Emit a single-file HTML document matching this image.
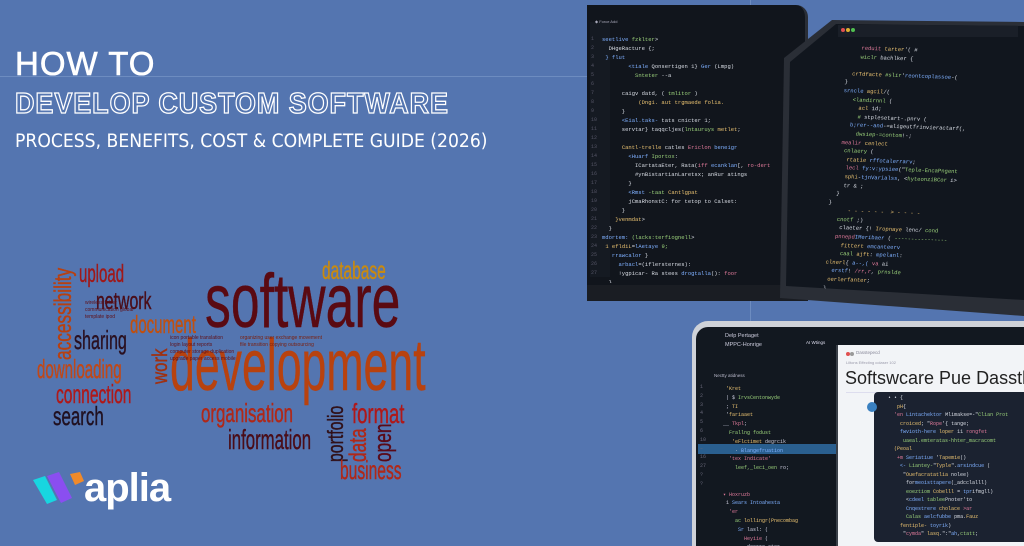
<!DOCTYPE html>
<html><head><meta charset="utf-8"><style>
*{margin:0;padding:0;box-sizing:border-box}
body{width:1024px;height:546px;overflow:hidden;background:#5475b0;font-family:"Liberation Sans",sans-serif;position:relative}
.a{position:absolute;white-space:nowrap}
.clip{position:absolute;overflow:hidden}
.w{position:absolute;white-space:nowrap;font-family:"Liberation Sans",sans-serif;line-height:1;transform-origin:0 0;-webkit-text-stroke:0.4px currentColor}
.code{position:absolute;font-family:"Liberation Mono",monospace;font-size:5.5px;line-height:9px;color:#d8dce4;white-space:pre}
.code b{font-weight:normal;color:#7fb0ff}.code i{font-style:normal;color:#e8c070}.code u{text-decoration:none;color:#9ad07a}.code s{text-decoration:none;color:#e07a9a}
.ln{position:absolute;font-family:"Liberation Mono",monospace;font-size:5px;line-height:9px;color:#556;white-space:pre}
</style></head><body>
<div class="a" style="left:0;top:76px;width:587px;height:1px;background:#6d8cc0"></div>
<div class="a" style="left:750px;top:0;width:1px;height:330px;background:#6d8cc0"></div>

<div class="a" style="left:15px;top:45px;font-size:33px;color:#fff;letter-spacing:1px;-webkit-text-stroke:0.6px #fff">HOW TO</div>
<div class="a" style="left:15px;top:88px;font-size:29px;font-weight:bold;color:transparent;-webkit-text-stroke:1.3px #fff;letter-spacing:1px;transform:scaleX(0.93);transform-origin:0 0">DEVELOP CUSTOM SOFTWARE</div>
<div class="a" style="left:15px;top:131px;font-size:18.5px;color:#fff;font-family:'DejaVu Sans',sans-serif;transform:scaleX(0.93);transform-origin:0 0">PROCESS, BENEFITS, COST &amp; COMPLETE GUIDE (2026)</div>

<!-- word cloud -->
<div class="w" style="left:205px;top:264px;font-size:76px;color:#5a0a12;transform:scaleX(0.68)">software</div>
<div class="w" style="left:170px;top:330px;font-size:72px;color:#b8420f;transform:scaleX(0.62)">development</div>
<div class="w" style="left:322px;top:259px;font-size:25px;color:#c98a10;transform:scaleX(0.62)">database</div>
<div class="w" style="left:79px;top:262px;font-size:25px;color:#a01818;transform:scaleX(0.6)">upload</div>
<div class="w" style="left:52px;top:360px;font-size:24px;color:#b84010;transform:rotate(-90deg) scaleX(0.72)">accessibility</div>
<div class="w" style="left:96px;top:290px;font-size:24px;color:#4a0d18;transform:scaleX(0.66)">network</div>
<div class="w" style="left:130px;top:313px;font-size:25px;color:#c05010;transform:scaleX(0.6)">document</div>
<div class="w" style="left:74px;top:327px;font-size:26px;color:#2a1020;transform:scaleX(0.62)">sharing</div>
<div class="w" style="left:150px;top:384px;font-size:21px;color:#a03010;transform:rotate(-90deg) scaleX(0.8)">work</div>
<div class="w" style="left:37px;top:356px;font-size:26px;color:#c04818;transform:scaleX(0.58)">downloading</div>
<div class="w" style="left:56px;top:381px;font-size:26px;color:#b01818;transform:scaleX(0.6)">connection</div>
<div class="w" style="left:53px;top:403px;font-size:26px;color:#201020;transform:scaleX(0.65)">search</div>
<div class="w" style="left:201px;top:400px;font-size:26px;color:#b02818;transform:scaleX(0.65)">organisation</div>
<div class="w" style="left:228px;top:426px;font-size:28px;color:#4a0d18;transform:scaleX(0.6)">information</div>
<div class="w" style="left:325px;top:462px;font-size:22px;color:#301018;transform:rotate(-90deg) scaleX(0.72)">portfolio</div>
<div class="w" style="left:352px;top:400px;font-size:28px;color:#b01818;transform:scaleX(0.66)">format</div>
<div class="w" style="left:347px;top:462px;font-size:24px;color:#b02818;transform:rotate(-90deg) scaleX(0.72)">data</div>
<div class="w" style="left:372px;top:462px;font-size:24px;color:#5a0a18;transform:rotate(-90deg) scaleX(0.72)">open</div>
<div class="w" style="left:340px;top:457px;font-size:26px;color:#b02818;transform:scaleX(0.6)">business</div>
<div class="w" style="left:85px;top:300px;font-size:5px;color:#601018;line-height:7px;-webkit-text-stroke:0">wireless  folder<br>communication  global<br> template  ipod</div>
<div class="w" style="left:170px;top:335px;font-size:5px;color:#601018;line-height:7px;-webkit-text-stroke:0">icon  portable  translation<br>login  layout  reports<br>computer  storage  duplication<br>upgrade  paper  access  mobile</div>
<div class="w" style="left:240px;top:335px;font-size:5px;color:#7a2010;line-height:7px;-webkit-text-stroke:0">organizing  user  exchange  movement<br>file  transition  copying  outsourcing</div>

<!-- logo -->
<svg class="a" style="left:32px;top:470px" width="56" height="36" viewBox="0 0 56 36">
<path d="M1 10 L13 6 L25 30 L15 34 Z" fill="#18d6e0"/>
<path d="M15 6 L27 2 L40 28 L29 33 Z" fill="#8a4ef0"/>
<path d="M38 4 L48 2 L52 11 L43 15 Z" fill="#f08a2a"/>
</svg>
<div class="a" style="left:84px;top:466px;font-size:40px;font-weight:bold;color:#fff;letter-spacing:-1px">aplia</div>

<!-- laptop 1 -->
<div class="a" style="left:587px;top:5px;width:221px;height:296px;background:#11151c;border-radius:0 12px 0 0;border-right:3px solid #2a2e36"></div>
<div class="a" style="left:587px;top:285px;width:221px;height:16px;background:#1a1d23"></div>
<div class="a" style="left:590px;top:22px;width:20px;height:255px;background:#151a22"></div>
<div class="clip" style="left:587px;top:5px;width:218px;height:278px">
<div class="a" style="left:8px;top:14px;font-size:4px;color:#aab">◆ Force Add</div>
<div class="ln" style="left:4px;top:30px">1
2
3
4
5
6
7
8
9
10
11
12
13
14
15
16
17
18
19
20
21
22
23
24
25
26
27</div>
<div class="code" style="left:15px;top:30px"><b>seetlive</b> <u>fzklter</u>&gt;
  DHgeRacture {;
 <b>} flut</b>
        <b>&lt;tiale</b> Qonsertigen 1} <b>Ger</b> (Lmpg)
          <u>Snteter</u> --a

      caigv datd, ( <u>tmlitor</u> )
           <i>(Dngi. aut trgmaede folia.</i>
      }
      <b>&lt;Eial.taks-</b> tats cnicter 1;
      servtar} taqqcljes(<u>lntauruys</u> <i>metlet</i>;

      <i>Cantl-trelle</i> catles <s>Ericlon</s> <b>beneigr</b>
        <b>&lt;Huarf</b> <u>Iportox</u>:
          ICartataEter, Rata(<s>iff</s> <b>ecanklan</b>[, <s>ro-dert</s>
          #ynBistartianLaretsx; anRur atings
        }
        <b>&lt;Rmst</b> <u>-taat</u> <i>Cantlgpat</i>
        jCmaRhonstC: for tetop to Calset:
      }
    <i>}venmdat</i>&gt;
  }
<b>mdortem:</b> <u>(lacks:terfiognell</u>&gt;
 <i>1 efldiL</i>=<b>lAetaye</b> <u>9;</u>
   <b>rrawcalor</b> }
     <b>arbacl</b>=(iflersternes):
     !ygpicar- Ra stees <b>drogtalla</b>(): <s>foor</s>
  }
 <b>ubpurtich</b> lace fyster en
 KlgdLtrN,-foqgecere contelcrenn:

  <b>oy</b> <u>rlesty</u>:
    reFlurildl-Branant <i>Iacpdlic</i></div>
</div>

<!-- laptop 2 -->
<div class="a" style="left:780px;top:18px;width:244px;height:298px;background:#2a2e36;clip-path:polygon(52px 2px,244px 4px,244px 298px,0 280px,4px 40px)"></div>
<div class="a" style="left:780px;top:18px;width:244px;height:298px;overflow:hidden;background:#11161e;clip-path:polygon(56px 6px,244px 8px,244px 282px,6px 268px,10px 44px)">
<div class="a" style="left:10px;top:273px;width:240px;height:6px;background:#1d6aa0;transform:rotate(3deg);transform-origin:0 0"></div>
<div class="a" style="left:58px;top:7px;width:180px;height:12px;background:#1a1f28"></div>
<div class="a" style="left:61px;top:10px;width:4px;height:4px;border-radius:50%;background:#e05050;box-shadow:5px 0 #e0b030,10px 0 #50c050"></div>
<div class="code" style="left:62px;top:26px;line-height:8.6px;transform:rotate(2deg) skewX(-4deg);transform-origin:0 0">      <s>reduit</s> <i>tarter</i>'( #
      <u>wiclr</u> bachlker {

    <i>crTdfacte</i> <u>#slir</u>'<b>reontcoplassoe</b>-(
  }
  <b>srncle</b> <i>agcil</i>/(
     <u>&lt;landirnnl</u> (
       <i>acl</i> 1d;
       <u>#</u> stplesetart-.pnrv (
     <b>b;rer--and</b>-=aligeutfrinvieractarf(,
       <u>dwsiep-=contom</u>!-;
   <s>mealir</s> <i>cenlect</i>
    <u>cnlaery</u> (
     <i>rtatie</i> <b>rffotalerrarv</b>;
     <s>lecl</s> <b>fy:v:ypsiee</b>("<u>Teple-EncaPngent</u>
     <i>sphi</i>-<b>tjnVarialss</b>, &lt;<u>hyteonziBCor</u> i&gt;
     tr &amp; ;
   }
 }
       <i>- - - - - -  &gt; - - - -</i>
    <u>cnotf</u> ;)
     claeter {! <i>Iropnaye</i> lenc/ <u>cond</u>
    <s>pnnepd</s><b>IMeribaer</b> ( <u>----------------</u>
      <i>fittert</i> <b>emcanteerv</b>
      <u>caal</u> <i>ajft</i>: <b>mpelanl</b>:
  <i>clnerl</i>{ <b>a--,(</b> <s>va</s> ai
    <b>erstf</b>! <s>/rr,r</s>, <u>prnslde</u>
   <i>oerlerfanter</i>;
  }
   <b>rmtatertf</b>(
    <u>"cfreir</u> <i>jerfone</i></div>
</div>

<!-- tablet -->
<div class="clip" style="left:692px;top:321px;width:332px;height:225px">
<div class="a" style="left:0;top:0;width:340px;height:240px;background:#cfd2d8;border-radius:16px 0 0 0"></div>
<div class="a" style="left:4px;top:6px;width:330px;height:230px;background:#121820;border-radius:12px 0 0 0"></div>
<div class="a" style="left:144px;top:24px;width:2px;height:210px;background:#3a4048"></div>
<div class="a" style="left:146px;top:24px;width:190px;height:210px;background:#f2f4f7"></div>
<div class="a" style="left:6px;top:123px;width:138px;height:10px;background:#2a5f8f"></div>
<div class="a" style="left:33px;top:11px;font-size:5.5px;color:#ccd;line-height:9px">Delp Pertaget<br>MPPC-Honrige</div>
<div class="a" style="left:114px;top:19px;font-size:4.5px;color:#dde">AI Wtings</div>
<div class="a" style="left:22px;top:52px;font-size:4.5px;color:#bbc">Nectty atidness</div>
<div class="clip" style="left:4px;top:59px;width:140px;height:166px">
<div class="ln" style="left:4px;top:3px;color:#667;line-height:8.8px">1
2
3
4
5
6
10
–
16
27
?
?</div>
<div class="code" style="left:24px;top:5px;font-size:5px;line-height:8.8px;color:#ccd">  <i>'Kret</i>
  | $ <u>IrvsCentonwyde</u>
  ; <i>TI</i>
  '<i>fariaaet</i>
 __ <s>Tkpl</s>;
   <u>Frallng fodust</u>
    <i>'eFlctimet</i> degrcik
     · <b>Blangefruation</b>
   <s>'tex Indicate'</s>
     <u>leef,_leci_oen</u> ro;


 <s>▾ Hoxruzb</s>
  1 <b>Sears Intoahesta</b>
   <s>'er</s>
     <u>ac</u> <i>lollingr(Pnecombag</i>
      <b>Sr</b> lasl: (
        <s>Heyiie</s> (
         decrre_ater,</div>
</div>
<div class="a" style="left:154px;top:31px;width:4px;height:4px;border-radius:50%;background:#e05050;box-shadow:4px 0 #999"></div>
<div class="a" style="left:164px;top:29px;font-size:4.5px;color:#889">Dasstepecd</div>
<div class="a" style="left:154px;top:39px;font-size:4px;color:#99a">Liltons Effecting colaser 102</div>
<div class="a" style="left:153px;top:47px;font-size:18px;color:#222">Softswcare Pue Dasstbpibrard</div>
<div class="a" style="left:154px;top:71px;width:178px;height:1px;background:#dde"></div>
<div class="a" style="left:182px;top:71px;width:150px;height:150px;background:#1b2230;border-radius:4px 0 0 4px"></div>
<div class="a" style="left:175px;top:81px;width:10px;height:10px;border-radius:50%;background:#3a80c0"></div>
<div class="clip" style="left:182px;top:71px;width:150px;height:148px">
<div class="code" style="left:14px;top:2px;font-size:5px;line-height:8.5px">• • {
   <i>pH</i>{
  <s>'en</s> <b>Lintachektor</b> Mlimakse=-"<u>Clian Prot</u>
    <i>croiced</i>; "<s>Rope</s>'{ tange;
    <b>fwvioth-here</b> <i>loper</i> 11 <s>rongfet</s>
     <u>uaeal.emteratas-hhter_macracomt</u>
  <i>(Peoal</i>
   <s>+m</s> <b>Seriatiue</b> '<i>Tapemie</i>()
    <b>&lt;-</b> <u>Liantey-</u>"<i>Typle</i>".<b>arsindcue</b> (
     "<i>Ouefacratatlia</i> nolee)
      for<b>meoisttapere</b>(_adcclalll)
      <u>eoeztiom</u> <i>Cobelll</i> = <b>tpr</b>ifmgll)
      &lt;<b>cdeel</b> <u>tablee</u>Pnoter'to
      <b>Cnqestrere</b> <i>cholace</i> <s>&gt;ar</s>
      <u>Calas</u> <b>aelcfubbe</b> pma.<i>Fauz</i>
    <i>fentiple-</i> <b>toyrik</b>)
     "<s>cymda</s>" <i>lasq</i>.":"<b>ah</b>,<u>ctatt</u>;
      <s>+Rae:</s> <i>IIft</i>{ <b>lovCeclletitions</b>
       <i>Comtrect</i>, <u>raster</u>(<i>IIE</i>);
     }</div>
</div>
</div>
</body></html>
